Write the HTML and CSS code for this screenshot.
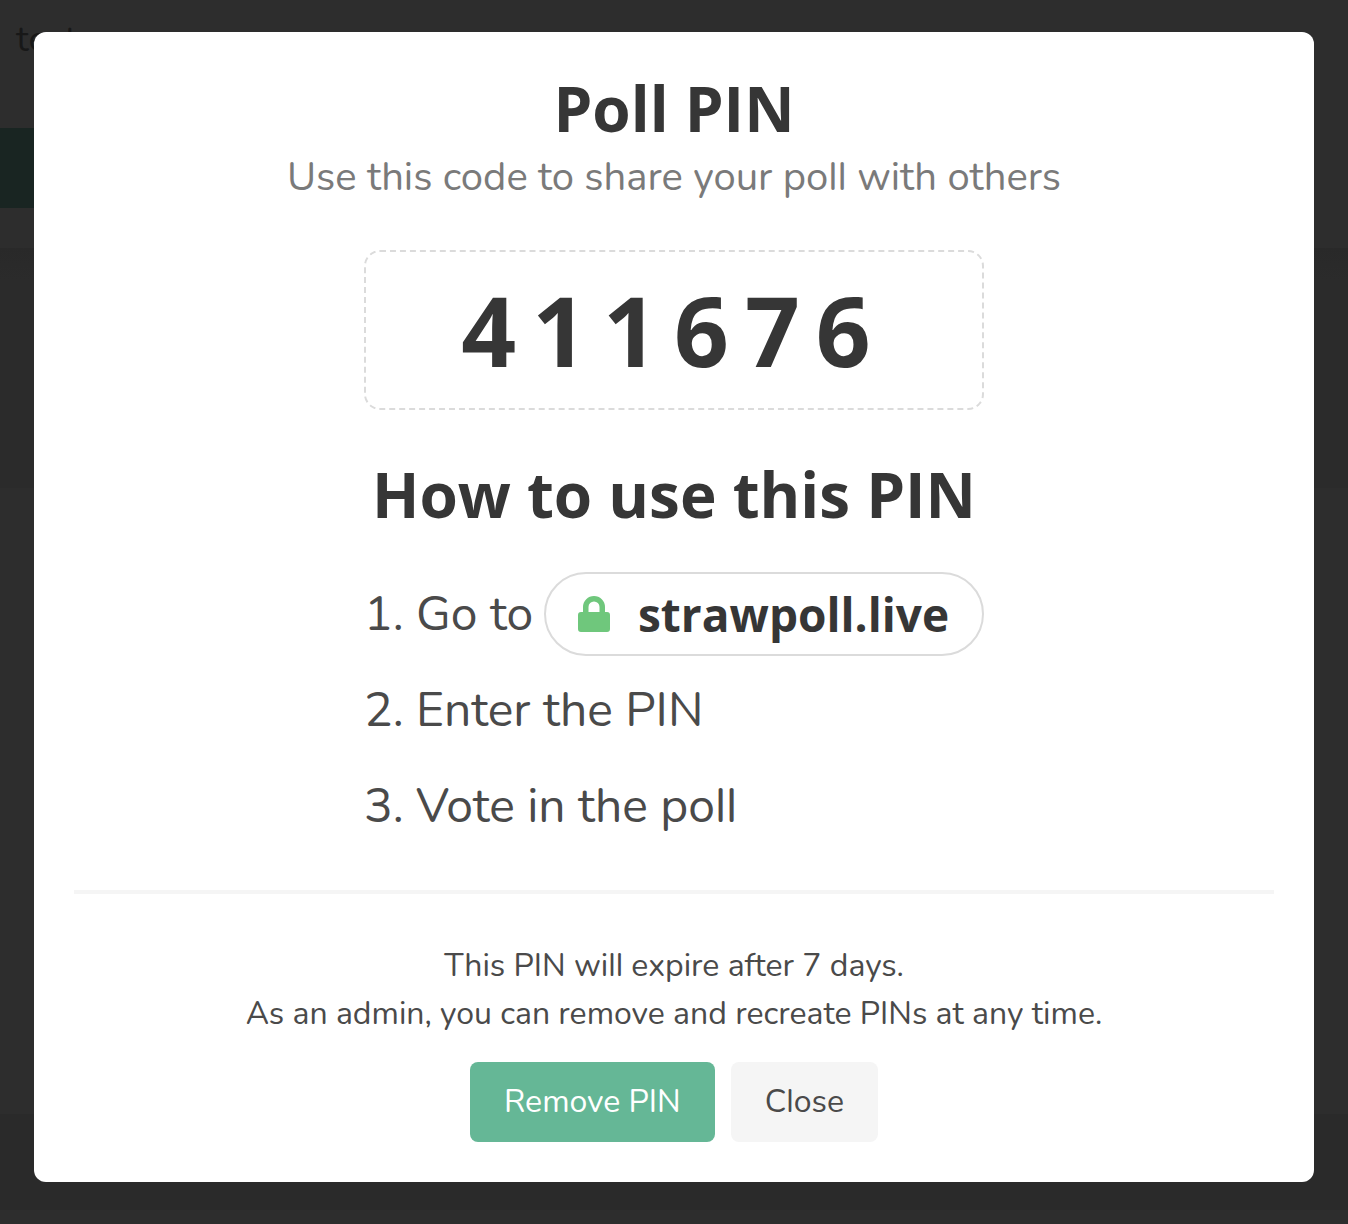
FILE: index.html
```html
<!DOCTYPE html>
<html lang="en">
<head>
<meta charset="utf-8">
<meta name="viewport" content="width=device-width, initial-scale=1">
<title>Poll PIN</title>
<link rel="stylesheet" href="styles.css">
</head>
<body>
<div class="page" aria-hidden="true">
  <div class="page-form">
    <p class="page-text">test</p>
    <div class="page-action"></div>
  </div>
  <div class="page-panel"></div>
  <div class="page-body"></div>
  <div class="page-footer"></div>
</div>
<div class="overlay">
  <main class="modal" role="dialog" aria-modal="true" aria-labelledby="modal-title">
    <h1 class="title" id="modal-title">Poll PIN</h1>
    <p class="subtitle">Use this code to share your poll with others</p>
    <div class="guide">
      <div class="pin">411676</div>
      <h2 class="title">How to use this PIN</h2>
      <ol class="steps">
        <li class="step"><span class="number">1.</span><span>Go to</span>
          <a class="address" href="#">
            <svg class="lock" viewBox="0 0 32 36" aria-hidden="true"><path fill="currentColor" fill-rule="evenodd" d="M5 16V11a11 11 0 0 1 22 0v5h2a3 3 0 0 1 3 3v14a3 3 0 0 1-3 3H3a3 3 0 0 1-3-3V19a3 3 0 0 1 3-3zM10.500 16h11V11a5.500 5.500 0 0 0-11 0z"/></svg>
            <span>strawpoll.live</span>
          </a>
        </li>
        <li class="step"><span class="number">2.</span><span>Enter the PIN</span></li>
        <li class="step"><span class="number">3.</span><span>Vote in the poll</span></li>
      </ol>
    </div>
    <hr class="divider">
    <p class="note">This PIN will expire after 7 days.<br>As an admin, you can remove and recreate PINs at any time.</p>
    <div class="actions">
      <button class="button primary" type="button">Remove PIN</button>
      <button class="button" type="button">Close</button>
    </div>
  </main>
</div>
</body>
</html>
```
FILE: styles.css
```css
* { box-sizing: border-box; }
body {
  margin: 0;
  background: #292929;
  color: #4a4a4a;
  font-family: Nunito, Lato, sans-serif;
  font-size: 32px;
  line-height: 48px;
  font-feature-settings: "ss02";
}
h1, h2, p, ol { margin: 0; padding: 0; }
.page {
  display: flex;
  flex-direction: column;
  min-height: 100vh;
  color: #181818;
}
.page-form {
  padding: 16px 0 40px;
  background: #2d2d2d;
}
.page-text { padding: 0 16px; font-size: 36px; }
.page-action {
  width: 50%;
  height: 80px;
  margin-top: 64px;
  background: #192522;
}
.page-panel {
  height: 240px;
  background: linear-gradient(#292929, #2b2b2b 32px);
}
.page-body { flex: 1; background: #2d2d2d; }
.page-footer {
  height: 110px;
  border-bottom: 14px solid #2d2d2d;
  background: #2a2a2a;
}
.overlay {
  position: absolute;
  inset: 0;
  display: flex;
  align-items: flex-start;
  justify-content: center;
  padding: 32px 34px;
}
.modal {
  flex: 1;
  max-width: 1280px;
  padding: 40px;
  border-radius: 12px;
  background: #fff;
  text-align: center;
}
.title {
  color: #363636;
  font-family: "Open Sans", "Noto Sans", sans-serif;
  font-size: 62px;
  font-weight: 700;
  line-height: 72px;
  font-feature-settings: normal;
}
.subtitle { color: #7a7a7a; font-size: 40px; line-height: 66px; }
.guide {
  display: grid;
  max-width: 620px;
  margin: 0 auto;
}
.pin {
  margin: 40px 0 48px;
  padding: 14px 0;
  border: 2px dashed #dbdbdb;
  border-radius: 16px;
  color: #363636;
  font: 700 96px/128px "Open Sans", "Noto Sans", sans-serif;
  letter-spacing: 16px;
}
.steps {
  display: grid;
  gap: 12px;
  margin-top: 42px;
  list-style: none;
  font-size: 48px;
  line-height: 84px;
}
.step {
  display: flex;
  align-items: center;
  gap: 10px;
  white-space: nowrap;
}
.number { width: 42px; text-align: left; }
.address {
  display: flex;
  align-items: center;
  gap: 28px;
  width: 440px;
  height: 84px;
  margin-left: auto;
  padding: 0 32px;
  border: 2px solid #dbdbdb;
  border-radius: 42px;
  color: #363636;
  font-family: "Open Sans", "Noto Sans", sans-serif;
  font-size: 46px;
  font-weight: 700;
  line-height: 80px;
  text-decoration: none;
  font-feature-settings: normal;
}
.lock { flex: none; width: 32px; height: 36px; color: #6fc77c; }
.divider {
  height: 4px;
  margin: 42px 0 48px;
  border: 0;
  background: #f5f5f5;
}
.actions {
  display: flex;
  justify-content: center;
  gap: 16px;
  margin-top: 24px;
}
.button {
  height: 80px;
  padding: 0 34px;
  border: 0;
  border-radius: 8px;
  background: #f5f5f5;
  color: #4a4a4a;
  font: inherit;
  font-feature-settings: inherit;
}
.primary { background: #65b796; color: #fff; }
```
